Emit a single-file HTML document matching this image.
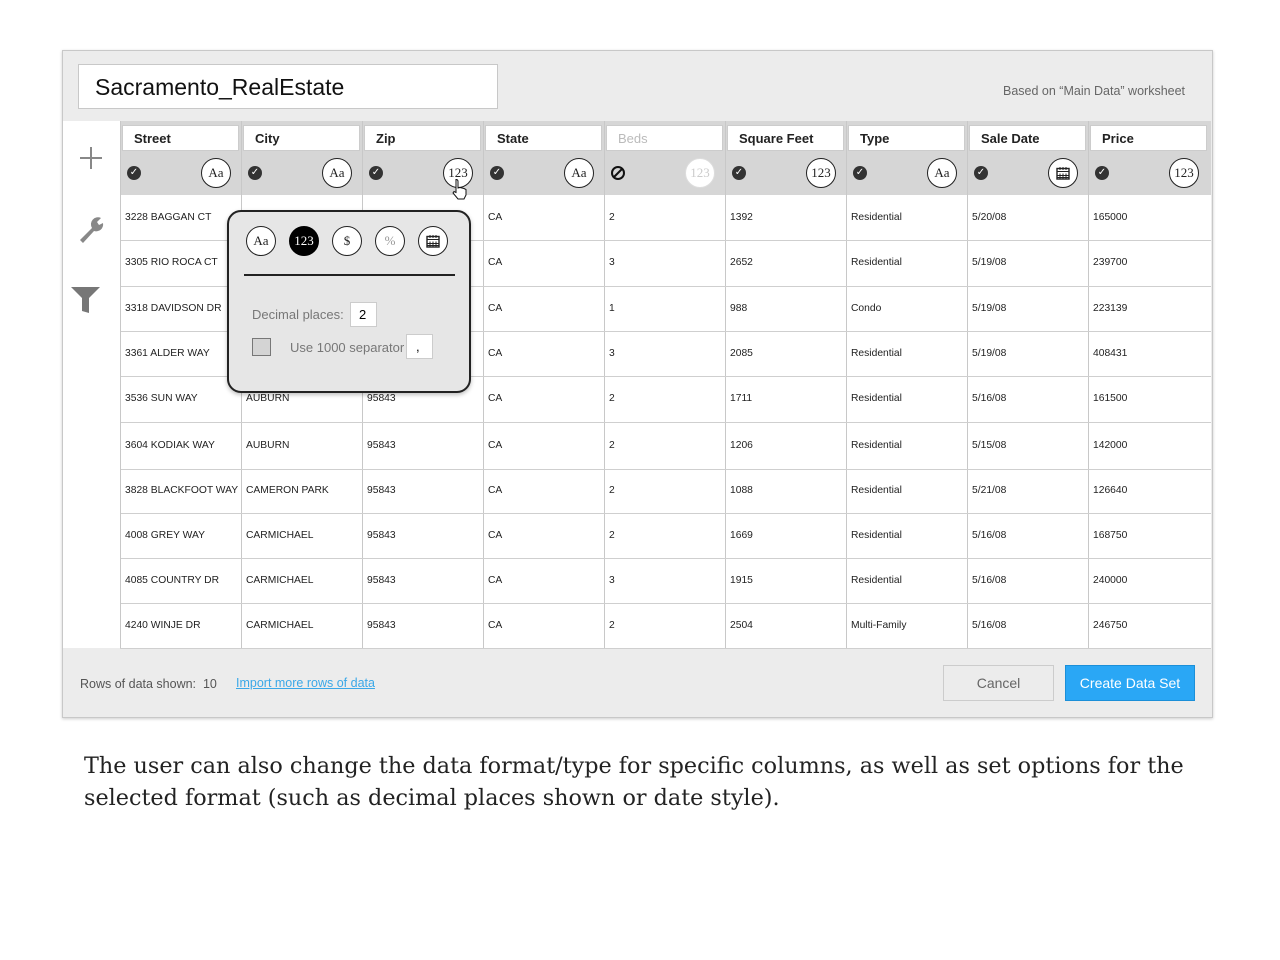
<!DOCTYPE html>
<html><head><style>
*{box-sizing:border-box;margin:0;padding:0}
body{width:1280px;height:960px;background:#fff;font-family:"Liberation Sans",sans-serif;position:relative;overflow:hidden}
.a{position:absolute}
.panel{left:62px;top:50px;width:1151px;height:668px;background:#ececec;border:1px solid #c8c8c8;box-shadow:0 1px 3px rgba(0,0,0,.2)}
.title{left:78px;top:64px;width:420px;height:45px;background:#fff;border:1px solid #c8c8c8;font-size:23px;padding:9px 0 0 16px;color:#111}
.side{left:63px;top:121px;width:57px;height:527px;background:#fff}
.hdr{height:26px;background:#fff;border:1px solid #ccc;font-weight:bold;font-size:13px;padding:5px 0 0 11px;color:#222}
.irow{top:152px;height:43px;background:#d6d6d6}
.circ{width:30px;height:30px;border-radius:50%;border:1.5px solid #222;background:#fff;font-family:"Liberation Serif",serif;font-size:13px;text-align:center;line-height:27px;color:#222}
.chk{width:14px;height:14px;border-radius:50%;background:#333;color:#fff;font-size:10px;line-height:14px;text-align:center}
.cell{font-size:10.3px;color:#222}
.vl{width:1px;background:#c8c8c8}
.hl{height:1px;background:#cfcfcf}
</style></head><body>
<div class="a panel"></div>
<div class="a title">Sacramento_RealEstate</div>
<div class="a" style="left:1003px;top:84px;font-size:12.5px;color:#666">Based on “Main Data” worksheet</div>
<div class="a side"></div>
<div class="a" style="left:120px;top:195px;width:1091px;height:453px;background:#fff"></div>
<div class="a" style="left:120px;top:121px;width:1091px;height:31px;background:#d6d6d6"></div>
<div class="a irow" style="left:120px;width:1091px"></div>
<div class="a" style="left:80px;top:157px;width:22px;height:2px;background:#888"></div>
<div class="a" style="left:90px;top:147px;width:2px;height:22px;background:#888"></div>
<svg class="a" style="left:76px;top:212px" width="30" height="32" viewBox="0 0 30 32"><path d="M4 28 L16 16 A7 7 0 0 1 25 6 L21 10 L23 13 L27 11 A7 7 0 0 1 18 19 L7 31 Z" fill="#888"/></svg>
<svg class="a" style="left:71px;top:285px" width="30" height="30" viewBox="0 0 30 30"><path d="M0 2 H29 L18 13 V28 L11 26 V13 Z" fill="#777"/></svg>
<div id="g"></div>
<script>
var cols=[["Street","Aa"],["City","Aa"],["Zip","123"],["State","Aa"],["Beds","123"],["Square Feet","123"],["Type","Aa"],["Sale Date","cal"],["Price","123"]];
var rows=[["3228 BAGGAN CT","","","CA","2","1392","Residential","5/20/08","165000"],
["3305 RIO ROCA CT","","","CA","3","2652","Residential","5/19/08","239700"],
["3318 DAVIDSON DR","","","CA","1","988","Condo","5/19/08","223139"],
["3361 ALDER WAY","","","CA","3","2085","Residential","5/19/08","408431"],
["3536 SUN WAY","AUBURN","95843","CA","2","1711","Residential","5/16/08","161500"],
["3604 KODIAK WAY","AUBURN","95843","CA","2","1206","Residential","5/15/08","142000"],
["3828 BLACKFOOT WAY","CAMERON PARK","95843","CA","2","1088","Residential","5/21/08","126640"],
["4008 GREY WAY","CARMICHAEL","95843","CA","2","1669","Residential","5/16/08","168750"],
["4085 COUNTRY DR","CARMICHAEL","95843","CA","3","1915","Residential","5/16/08","240000"],
["4240 WINJE DR","CARMICHAEL","95843","CA","2","2504","Multi-Family","5/16/08","246750"]];
var rb=[195,240,286,331,376,422,469,513,558,603,648];
var cal='<svg width="14" height="14" viewBox="0 0 14 14" style="margin-top:7px"><rect x="1" y="2.5" width="12" height="10.5" fill="none" stroke="#222" stroke-width="1.4"/><path d="M1 5.5H13M4 7.5V13M7 7.5V13M10 7.5V13M1 9.5H13M1 11.5H13M4 1V4M7 1V4M10 1V4" stroke="#222" stroke-width="1"/></svg>';
var h='';
for(var i=0;i<9;i++){var x=120+i*121;
 var dis=i==4;
 h+='<div class="a hdr" style="left:'+(x+2)+'px;top:125px;width:117px;'+(dis?'color:#bbb;font-weight:normal':'')+'">'+cols[i][0]+'</div>';
 h+= dis?'<div class="a" style="left:'+(x+7)+'px;top:166px;width:14px;height:14px;border-radius:50%;border:2px solid #111"><div style="position:absolute;left:4px;top:-1px;width:2px;height:12px;background:#111;transform:rotate(45deg)"></div></div>'
   :'<div class="a chk" style="left:'+(x+7)+'px;top:166px">✓</div>';
 var c=cols[i][1];
 h+='<div class="a circ" style="left:'+(x+81)+'px;top:158px;'+(dis?'border-color:#ddd;color:#ccc':'')+'">'+(c=='cal'?cal:c)+'</div>';
 if(i>0)h+='<div class="a vl" style="left:'+x+'px;top:121px;height:527px"></div>';
 for(var r=0;r<10;r++){var t=rows[r][i];
  if(t)h+='<div class="a cell" style="left:'+(x+5)+'px;top:'+((rb[r]+rb[r+1])/2-6)+'px">'+t+'</div>';}
}
for(var r=1;r<11;r++)h+='<div class="a hl" style="left:120px;top:'+rb[r]+'px;width:1091px"></div>';
h+='<div class="a vl" style="left:120px;top:121px;height:527px"></div>';
document.getElementById('g').innerHTML=h;
</script>
<svg class="a" style="left:451px;top:178px" width="20" height="24" viewBox="0 0 20 24"><path d="M5 1.5 C6.5 1.5 7 2.5 7 3.5 V10 L9 9.5 L11 10 L13 10.5 L15 11.5 V17 L13 21 H7 L2 15 L3 13.5 L5 14.5 Z" fill="#fff" stroke="#111" stroke-width="1"/></svg>
<div class="a" style="left:227px;top:210px;width:244px;height:183px;background:#e6e6e6;border:2px solid #222;border-radius:14px;box-shadow:0 2px 4px rgba(0,0,0,.25)"></div>
<div class="a circ" style="left:246px;top:226px">Aa</div>
<div class="a circ" style="left:289px;top:226px;background:#000;color:#fff;border-color:#000">123</div>
<div class="a circ" style="left:332px;top:226px">$</div>
<div class="a circ" style="left:375px;top:226px;color:#999">%</div>
<div class="a circ" style="left:418px;top:226px">
<svg width="14" height="14" viewBox="0 0 14 14" style="margin-top:7px"><rect x="1" y="2.5" width="12" height="10.5" fill="none" stroke="#222" stroke-width="1.4"/><path d="M1 5.5H13M4 7.5V13M7 7.5V13M10 7.5V13M1 9.5H13M1 11.5H13M4 1V4M7 1V4M10 1V4" stroke="#222" stroke-width="1"/></svg></div>
<div class="a" style="left:244px;top:274px;width:211px;height:2px;background:#222"></div>
<div class="a" style="left:252px;top:307px;font-size:13px;color:#777">Decimal places:</div>
<div class="a" style="left:350px;top:302px;width:27px;height:25px;background:#fff;border:1px solid #ccc;font-size:13px;padding:4px 0 0 8px">2</div>
<div class="a" style="left:252px;top:338px;width:19px;height:18px;background:#d4d4d4;border:1px solid #777"></div>
<div class="a" style="left:290px;top:340px;font-size:13px;color:#777">Use 1000 separator</div>
<div class="a" style="left:406px;top:334px;width:27px;height:25px;background:#fff;border:1px solid #ccc;font-size:13px;padding:4px 0 0 9px">,</div>
<div class="a" style="left:80px;top:677px;font-size:12.5px;color:#555">Rows of data shown:&nbsp; 10</div>
<div class="a" style="left:236px;top:676px;font-size:12.5px;color:#3aa8e8;text-decoration:underline">Import more rows of data</div>
<div class="a" style="left:943px;top:665px;width:111px;height:36px;background:#ececec;border:1px solid #ccc;font-size:14px;color:#666;text-align:center;line-height:34px">Cancel</div>
<div class="a" style="left:1065px;top:665px;width:130px;height:36px;background:#2aa7f5;border:1px solid #1b8fd8;font-size:14px;color:#fff;text-align:center;line-height:34px">Create Data Set</div>
<div class="a" style="left:84px;top:750px;width:1130px;font-family:'DejaVu Serif',serif;font-size:22.3px;line-height:32px;color:#222">The user can also change the data format/type for specific columns, as well as set options for the selected format (such as decimal places shown or date style).</div>
</body></html>
